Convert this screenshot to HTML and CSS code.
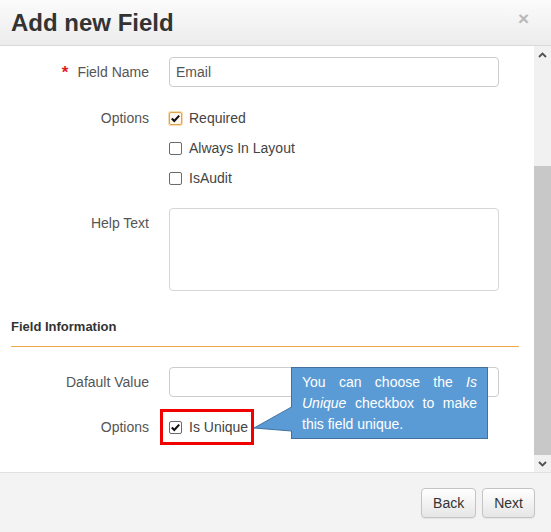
FILE: index.html
```html
<!DOCTYPE html>
<html>
<head>
<meta charset="utf-8">
<link rel="stylesheet" href="styles.css">
</head>
<body>
<div class="modal">
  <header class="modal-header">
    <h1 class="title">Add new Field</h1>
    <span class="close">×</span>
  </header>
  <div class="modal-body">
    <div class="content">
      <div class="row first">
        <label class="lbl"><span class="req">*</span>Field Name</label>
        <div class="ctrl"><div class="input">Email</div></div>
      </div>
      <div class="row gap16">
        <label class="lbl">Options</label>
        <div class="ctrl">
          <div class="cb-item"><span class="cb checked focus"><svg viewBox="0 0 13 13" width="13" height="13"><path d="M2.8 6.4 L5.3 9 L10.2 3.6" fill="none" stroke="#111" stroke-width="2.1"/></svg></span><span class="cb-text">Required</span></div>
          <div class="cb-item"><span class="cb"></span><span class="cb-text">Always In Layout</span></div>
          <div class="cb-item"><span class="cb"></span><span class="cb-text">IsAudit</span></div>
        </div>
      </div>
      <div class="row gap15">
        <label class="lbl">Help Text</label>
        <div class="ctrl"><div class="textarea"></div></div>
      </div>
      <div class="section">
        <h2 class="section-title">Field Information</h2>
      </div>
      <div class="row gap20">
        <label class="lbl">Dafault Value</label>
        <div class="ctrl"><div class="input"></div></div>
      </div>
      <div class="row gap15">
        <label class="lbl">Options</label>
        <div class="ctrl">
          <div class="cb-item highlight"><span class="cb checked"><svg viewBox="0 0 13 13" width="13" height="13"><path d="M2.8 6.4 L5.3 9 L10.2 3.6" fill="none" stroke="#111" stroke-width="2.1"/></svg></span><span class="cb-text">Is Unique</span><span class="redbox"></span></div>
        </div>
      </div>
      <div class="callout">
        <svg class="pointer" width="40" height="27" viewBox="0 0 40 27"><polygon points="39,1 1,22 39,25" fill="#5b9bd5"/><polyline points="38.5,1 1,22 38.5,25" fill="none" stroke="#41719c" stroke-width="1"/></svg>
        <p class="callout-text">You can choose the <i>Is Unique</i> checkbox to make this field unique.</p>
      </div>
    </div>
    <div class="scrollbar">
      <div class="sb-btn"><svg width="9" height="6" viewBox="0 0 9 6"><path d="M1 5 L4.5 1.5 L8 5" fill="none" stroke="#505050" stroke-width="1.8"/></svg></div>
      <div class="sb-space"></div>
      <div class="sb-thumb"></div>
      <div class="sb-btn"><svg width="9" height="6" viewBox="0 0 9 6"><path d="M1 1 L4.5 4.5 L8 1" fill="none" stroke="#505050" stroke-width="1.8"/></svg></div>
    </div>
  </div>
  <footer class="modal-footer">
    <button class="btn">Back</button>
    <button class="btn">Next</button>
  </footer>
</div>
</body>
</html>
```

FILE: styles.css
```css
* { box-sizing: border-box; }
html, body { margin: 0; padding: 0; background: #fff; }
body { font-family: "Liberation Sans", Arial, sans-serif; font-size: 14px; color: #333; }

.modal { width: 551px; height: 532px; display: flex; flex-direction: column; overflow: hidden; }

.modal-header {
  height: 46px; flex: none;
  display: flex; align-items: center; justify-content: space-between;
  padding: 0 22px 0 11px;
  background: linear-gradient(#fbfbfb, #ececec);
  border-bottom: 1px solid #d9d9d9;
}
.title { margin: 0; font-size: 24px; font-weight: bold; color: #333; line-height: 46px; }
.close { font-size: 19px; font-weight: bold; color: #b9b9b9; line-height: 1; margin-top: -8px; }

.modal-body { height: 426px; flex: none; display: flex; }
.content { position: relative; width: 534px; padding-top: 11px; overflow: hidden; }

.row { display: flex; align-items: flex-start; }
.row.gap16 { margin-top: 16px; }
.row.gap15 { margin-top: 15px; }
.row.gap20 { margin-top: 20px; }
.lbl { width: 149px; text-align: right; padding-top: 5px; line-height: 20px; color: #555; flex: none; }
.req { color: #e31b1b; font-weight: bold; font-size: 17px; margin-right: 9px; position: relative; top: 1px; }
.ctrl { margin-left: 20px; width: 330px; }

.input {
  height: 30px; border: 1px solid #ccc; border-radius: 4px;
  padding: 0 6px; line-height: 28px; color: #555; background: #fff;
}
.textarea { height: 83px; border: 1px solid #d6d6d6; border-radius: 4px; background: #fff; }

.cb-item { position: relative; height: 30px; display: flex; align-items: center; }
.cb-item.highlight { width: 84px; }
.cb {
  width: 13px; height: 13px; flex: none; border: 1px solid #6b6b6b; border-radius: 2px; background: #fff;
  position: relative;
}
.cb svg { position: absolute; left: -1px; top: -1px; }
.cb.focus { border-color: #e2a24a; box-shadow: 0 0 0 1px #f6dcb0; background: #fff8ee; }
.cb-text { margin-left: 7px; color: #444; }

.redbox {
  position: absolute; left: -9px; top: -3px; width: 94px; height: 36px;
  border: 3px solid #f10000;
}

.section { margin: 26px 15px 0 11px; border-bottom: 1px solid #f0aa45; padding-bottom: 9px; }
.section-title { margin: 0; font-size: 13px; font-weight: bold; line-height: 20px; color: #333; }

.callout {
  position: absolute; left: 291px; top: 321px; width: 197px;
  background: #5b9bd5; border: 1px solid #41719c;
  padding: 4px 10px 3px 10px;
}
.callout-text { margin: 0; color: #fff; font-size: 14px; line-height: 21px; text-align: justify; }
.pointer { position: absolute; left: -39px; top: 38px; }

.scrollbar { width: 17px; flex: none; display: flex; flex-direction: column; background: #f1f1f1; }
.sb-btn { height: 17px; flex: none; display: flex; align-items: center; justify-content: center; }
.sb-space { height: 103px; flex: none; }
.sb-thumb { height: 289px; flex: none; background: #c8c8c8; }

.modal-footer {
  flex: 1; background: #f3f3f3; border-top: 1px solid #e1e1e1;
  display: flex; justify-content: flex-end; align-items: flex-start;
  padding: 15px 16px 0 0; gap: 6px;
}
.btn {
  height: 30px; padding: 0 11px; font-family: "Liberation Sans", Arial, sans-serif; font-size: 14px; color: #333;
  background: linear-gradient(#ffffff, #e6e6e6); border: 1px solid #c4c4c4; border-radius: 4px;
  box-shadow: 0 1px 1px rgba(0,0,0,0.06);
}
```
